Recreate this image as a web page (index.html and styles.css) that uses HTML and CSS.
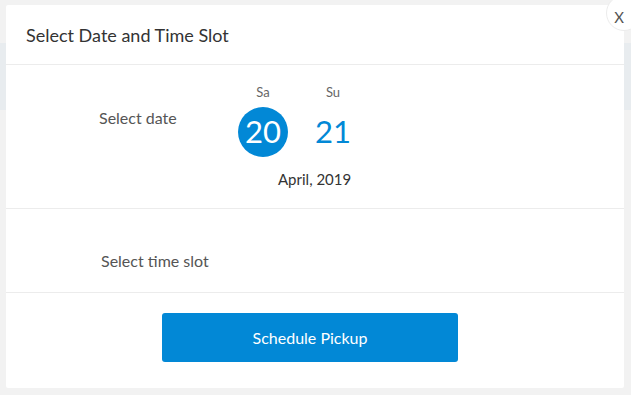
FILE: index.html
```html
<!DOCTYPE html>
<html lang="en">

<head>
    <meta charset="UTF-8" />
    <meta name="viewport" content="width=device-width, initial-scale=1.0">
    <title>Select Date and Time Slot</title>
    <link rel="stylesheet" href="styles.css">
</head>

<body>
    <div class="modal">
        <button class="close">X</button>

        <div class="modal-header">
            <h3>Select Date and Time Slot</h3>
        </div>

        <div class="section date-section">
            <div class="label">Select date</div>
            <div class="picker">
                <div class="days">
                    <div class="day selected">
                        <span class="weekday">Sa</span>
                        <span class="num">20</span>
                    </div>
                    <div class="day">
                        <span class="weekday">Su</span>
                        <span class="num">21</span>
                    </div>
                </div>
                <div class="month">April, 2019</div>
            </div>
        </div>

        <div class="section time-section">
            <div class="label">Select time slot</div>
        </div>

        <div class="modal-footer">
            <button class="primary">Schedule Pickup</button>
        </div>
    </div>
</body>

</html>
```

FILE: styles.css
```css
* {
    box-sizing: border-box;
}

body {
    margin: 0;
    font-family: Lato, 'Open Sans', sans-serif;
    background: linear-gradient(to bottom, #f2f2f2 43px, #e8ecef 43px, #e8ecef 110px, #f2f2f2 110px);
    background-color: #f2f2f2;
    height: 395px;
    padding: 5px 0 0 6px;
    overflow: hidden;
}

.modal {
    position: relative;
    width: 618px;
    background: #fff;
    border-radius: 2px;
}

.close {
    position: absolute;
    top: -10px;
    right: -18px;
    width: 36px;
    height: 36px;
    border-radius: 50%;
    border: 1px solid #ececec;
    background: #fff;
    color: #555;
    font-family: Lato, sans-serif;
    font-size: 15px;
    padding: 9px 10px 0 0;
    line-height: 1;
    cursor: pointer;
}

.modal-header {
    height: 60px;
    padding: 0 20px;
    display: flex;
    align-items: center;
    border-bottom: 1px solid #ececec;
}

.modal-header h3 {
    margin: 0;
    font-size: 18px;
    font-weight: 400;
    color: #333;
    padding-top: 1px;
}

.section {
    display: flex;
    border-bottom: 1px solid #ececec;
    padding-left: 93px;
}

.label {
    width: 139px;
    font-size: 16px;
    color: #555;
}

.date-section {
    height: 144px;
    padding-top: 43px;
}

.picker {
    display: flex;
    flex-direction: column;
    margin: -24px 0 0 -10px;
}

.days {
    display: flex;
}

.day {
    width: 70px;
    display: flex;
    flex-direction: column;
    align-items: center;
}

.weekday {
    font-size: 13px;
    color: #666;
    line-height: 16px;
    margin-bottom: 7px;
}

.num {
    width: 50px;
    height: 50px;
    border-radius: 50%;
    display: flex;
    align-items: center;
    justify-content: center;
    font-size: 31px;
    color: #0288d6;
    padding-bottom: 2px;
}

.day.selected .num {
    background: #0288d6;
    color: #fff;
}

.month {
    font-size: 15px;
    color: #333;
    margin: 13px 0 0 50px;
}

.time-section {
    height: 84px;
    padding-top: 42px;
    padding-left: 95px;
}

.modal-footer {
    height: 95px;
    display: flex;
    justify-content: center;
    padding: 20px 10px 0 0;
}

.primary {
    width: 296px;
    height: 49px;
    border: none;
    border-radius: 3px;
    background: #0288d6;
    color: #fff;
    font-family: Lato, sans-serif;
    font-size: 16px;
    cursor: pointer;
}
```
